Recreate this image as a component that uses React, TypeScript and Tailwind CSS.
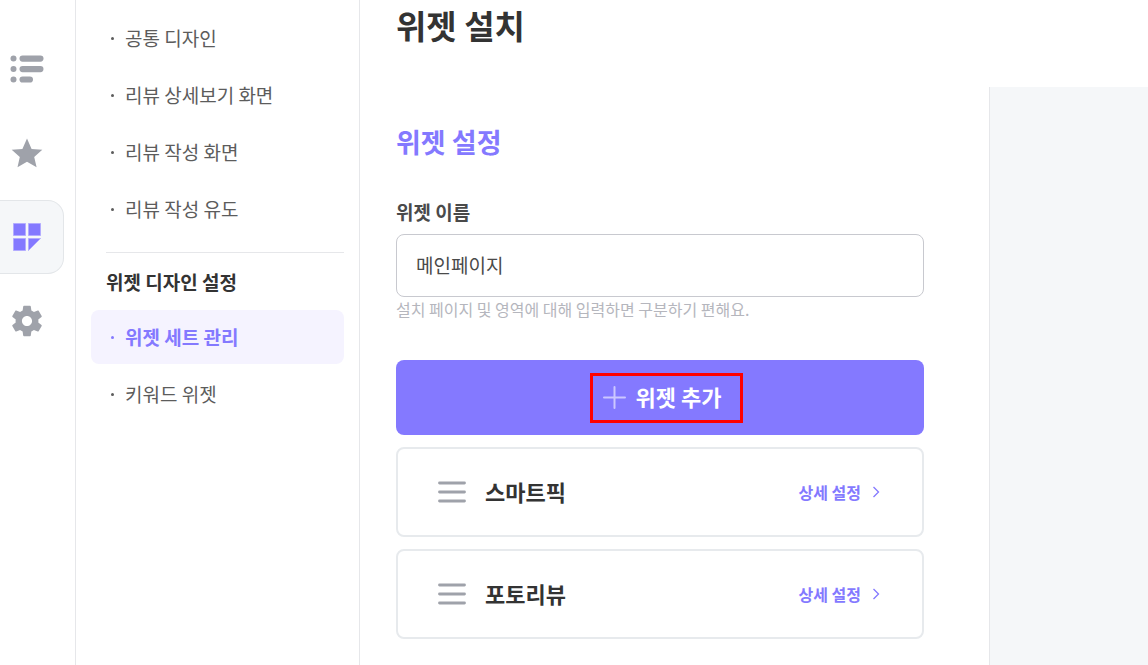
import React, { useState } from 'react';
import clsx from 'clsx';

const designMenu = ['공통 디자인', '리뷰 상세보기 화면', '리뷰 작성 화면', '리뷰 작성 유도'];
const widgetMenu = ['위젯 세트 관리', '키워드 위젯'];
const widgets = ['스마트픽', '포토리뷰'];

const ListIcon = () => (
  <svg width="34" height="28" viewBox="0 0 34 28" fill="currentColor" aria-hidden="true">
    <circle cx="3.5" cy="3.5" r="3" />
    <circle cx="3.5" cy="14" r="3" />
    <circle cx="3.5" cy="24.5" r="3" />
    <rect x="9.5" y="0.5" width="24" height="6.2" rx="3.1" />
    <rect x="9.5" y="11" width="24" height="6.2" rx="3.1" />
    <rect x="9.5" y="21.4" width="13.5" height="6.2" rx="3.1" />
  </svg>
);

const StarIcon = () => (
  <svg width="32" height="30" viewBox="0 0 32 30" fill="currentColor" aria-hidden="true">
    <path d="M16 0.5 20.6 11 31.3 11.7 23.2 18.9 25.6 29.2 16 23.8 6.5 29.2 8.8 18.9 0.7 11.7 11.4 11Z" />
  </svg>
);

const WidgetIcon = () => (
  <svg width="28" height="28" viewBox="0 0 28 28" aria-hidden="true">
    <g fill="#8479ff" stroke="#b3acff" strokeWidth="1">
      <path d="M.5.5h12v12H.5zM15.5.5h12v12h-12zM.5 15.5h12v12H.5zM15.5 15.5h12l-12 12z" />
    </g>
  </svg>
);

const GearIcon = () => (
  <svg width="38" height="38" viewBox="0 0 24 24" fill="currentColor" aria-hidden="true">
    <path d="M19.14 12.94c.04-.3.06-.61.06-.94 0-.32-.02-.64-.07-.94l2.03-1.58c.18-.14.23-.41.12-.61l-1.92-3.32c-.12-.22-.37-.29-.59-.22l-2.39.96c-.5-.38-1.03-.7-1.62-.94l-.36-2.54c-.04-.24-.24-.41-.48-.41h-3.84c-.24 0-.43.17-.47.41l-.36 2.54c-.59.24-1.13.57-1.62.94l-2.39-.96c-.22-.08-.47 0-.59.22L2.74 8.87c-.12.21-.08.47.12.61l2.03 1.58c-.05.3-.09.63-.09.94s.02.64.07.94l-2.03 1.58c-.18.14-.23.41-.12.61l1.92 3.32c.12.22.37.29.59.22l2.39-.96c.5.38 1.03.7 1.62.94l.36 2.54c.05.24.24.41.48.41h3.84c.24 0 .44-.17.47-.41l.36-2.54c.59-.24 1.13-.56 1.62-.94l2.39.96c.22.08.47 0 .59-.22l1.92-3.32c.12-.22.07-.47-.12-.61l-2.01-1.58zM12 15.2c-1.77 0-3.2-1.43-3.2-3.2s1.43-3.2 3.2-3.2 3.2 1.43 3.2 3.2-1.43 3.2-3.2 3.2z" />
  </svg>
);

const railItems = [
  { label: '목록', Icon: ListIcon },
  { label: '리뷰', Icon: StarIcon },
  { label: '위젯', Icon: WidgetIcon },
  { label: '설정', Icon: GearIcon },
];

const Rail: React.FC = () => (
  <nav className="flex w-[76px] shrink-0 flex-col gap-[10px] border-r border-[#e6e7ea] pt-8">
    {railItems.map(({ label, Icon }, i) => (
      <button
        key={label}
        type="button"
        aria-label={label}
        className={clsx(
          'flex h-[74px] w-16 items-center justify-center rounded-r-2xl border border-l-0 pr-[10px] text-[#9fa2aa]',
          i === 2 ? 'border-[#e3e6e9] bg-[#f5f7f9]' : 'border-transparent'
        )}
      >
        <Icon />
      </button>
    ))}
  </nav>
);

const MenuItem: React.FC<{ label: string; active?: boolean }> = ({ label, active }) => (
  <li>
    <a
      href="#"
      aria-current={active ? 'page' : undefined}
      className={clsx(
        'flex h-[54px] items-center gap-[11px] rounded-lg pl-5 text-[19px] leading-7',
        active ? 'bg-[#f5f3ff] font-bold text-[#8479ff]' : 'text-[#5c5c5c]'
      )}
    >
      <span className="size-[3px] rounded-full bg-current" />
      {label}
    </a>
  </li>
);

const Sidebar: React.FC = () => (
  <aside className="w-[284px] shrink-0 border-r border-[#e6e7ea] px-[15px] pt-[11px]">
    <ul className="flex flex-col gap-[3px]">
      {designMenu.map((label) => (
        <MenuItem key={label} label={label} />
      ))}
    </ul>
    <hr className="mt-4 ml-[15px] border-[#e6e7ea]" />
    <h2 className="mt-[15px] mb-[14px] pl-[15px] text-[19px] leading-7 font-bold text-[#333333]">위젯 디자인 설정</h2>
    <ul className="flex flex-col gap-[3px]">
      {widgetMenu.map((label, i) => (
        <MenuItem key={label} label={label} active={i === 0} />
      ))}
    </ul>
  </aside>
);

const WidgetCard: React.FC<{ name: string }> = ({ name }) => (
  <li className="flex h-[90px] items-center rounded-lg border-2 border-[#e7eaed] pr-[42px] pl-10">
    <svg width="28" height="22" viewBox="0 0 28 22" stroke="#9fa2aa" strokeWidth="2.8" strokeLinecap="round" aria-hidden="true">
      <path d="M1.5 2h25M1.5 11h25M1.5 20h25" />
    </svg>
    <h3 className="ml-[19px] pb-[3px] text-[22px] leading-8 font-bold text-[#333333]">{name}</h3>
    <a href="#" className="ml-auto flex items-center gap-[11px] text-[16px] leading-6 font-bold text-[#8479ff]">
      상세 설정
      <svg width="8" height="12" viewBox="0 0 8 12" fill="none" stroke="currentColor" strokeWidth="1.3" aria-hidden="true">
        <path d="M1.5 1 6.5 6l-5 5" />
      </svg>
    </a>
  </li>
);

const WidgetForm: React.FC = () => {
  const [name, setName] = useState('메인페이지');

  return (
    <section className="min-w-0 flex-1 pt-[35px] pr-[65px] pb-6 pl-9">
      <h2 className="text-[27px] leading-10 font-bold text-[#8479ff]">위젯 설정</h2>

      {/* Widget name */}
      <label htmlFor="widget-name" className="mt-9 block text-[19px] leading-7 font-bold text-[#4a4a4a]">
        위젯 이름
      </label>
      <input
        id="widget-name"
        type="text"
        value={name}
        onChange={(e) => setName(e.target.value)}
        className="mt-2 block h-[63px] w-full rounded-lg border border-[#c8c9cf] px-[19px] pb-[2px] text-[19px] text-[#4a4a4a] outline-none"
      />
      <p className="text-[16px] leading-6 text-[#b5b6bd]">
        설치 페이지 및 영역에 대해 입력하면 구분하기 편해요.
      </p>

      {/* Add button with the highlighted label */}
      <button type="button" className="mt-[39px] flex h-[75px] w-full items-center justify-center rounded-lg bg-[#8479ff] pl-1 text-white">
        <span className="relative flex items-center gap-[10px] text-[22px] leading-8 font-bold">
          <svg width="23" height="23" viewBox="0 0 23 23" stroke="#ccc7ff" strokeWidth="2" strokeLinecap="round" aria-hidden="true">
            <path d="M11.5 1v21M1 11.5h21" />
          </svg>
          <span className="pb-1">위젯 추가</span>
          <span className="absolute -inset-y-[7px] -right-[22px] -left-[13px] border-3 border-[#ff0000]" />
        </span>
      </button>

      {/* Installed widgets */}
      <ul className="mt-3 flex flex-col gap-3">
        {widgets.map((widget) => (
          <WidgetCard key={widget} name={widget} />
        ))}
      </ul>
    </section>
  );
};

const App: React.FC = () => (
  <div className="flex min-h-screen bg-white font-['Noto_Sans_CJK_KR',sans-serif]">
    <Rail />
    <Sidebar />
    <main className="flex min-w-0 flex-1 flex-col">
      <header className="h-[87px] pt-[2px] pl-9">
        <h1 className="text-[33px] leading-[46px] font-bold text-[#333333]">위젯 설치</h1>
      </header>
      <div className="flex flex-1">
        <WidgetForm />
        <div className="w-[159px] shrink-0 border-l border-[#e6e7ea] bg-[#f5f7f9]" />
      </div>
    </main>
  </div>
);

export default App;
